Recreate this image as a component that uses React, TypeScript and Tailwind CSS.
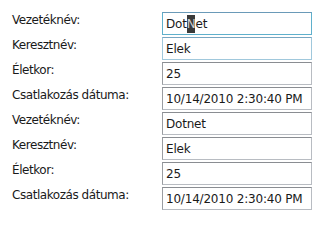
import React from "react";

type Row = { label: string; value: React.ReactNode; variant: "focus" | "hover" | "normal" };

const rows: Row[] = [
  {
    label: "Vezetéknév:",
    value: (
      <>
        Dot<span className="bg-[#3a3a3a] text-[#d0d0d0]">N</span>et
      </>
    ),
    variant: "focus",
  },
  { label: "Keresztnév:", value: "Elek", variant: "hover" },
  { label: "Életkor:", value: "25", variant: "normal" },
  { label: "Csatlakozás dátuma:", value: "10/14/2010 2:30:40 PM", variant: "normal" },
  { label: "Vezetéknév:", value: "Dotnet", variant: "normal" },
  { label: "Keresztnév:", value: "Elek", variant: "normal" },
  { label: "Életkor:", value: "25", variant: "normal" },
  { label: "Csatlakozás dátuma:", value: "10/14/2010 2:30:40 PM", variant: "normal" },
];

export default function App() {
  return (
    <div
      className="w-[325px] h-[226px] bg-white pl-[12px] pt-[12px] text-[12px] text-[#1a1a1a]"
      style={{ fontFamily: '"DejaVu Sans", Verdana, sans-serif' }}
    >
      <div className="flex flex-col">
        {rows.map((r, i) => (
          <div key={i} className="flex h-[25px]">
            <div className="w-[150px] leading-[16px] tracking-[-0.45px]">{r.label}</div>
            <div
              className={
                "w-[150px] h-[23px] border flex items-center pl-[3px] pt-[1px] tracking-[-0.2px] whitespace-nowrap " +
                (r.variant === "focus"
                  ? "border-[#5fb0cc] border-t-[#6a9ab8]"
                  : r.variant === "hover"
                  ? "border-[#a0c8dc] border-t-[#78a6c2]"
                  : "border-[#b8bcc2] border-t-[#8a8d92] border-l-[#9a9da2]")
              }
            >
              {r.value}
            </div>
          </div>
        ))}
      </div>
    </div>
  );
}
